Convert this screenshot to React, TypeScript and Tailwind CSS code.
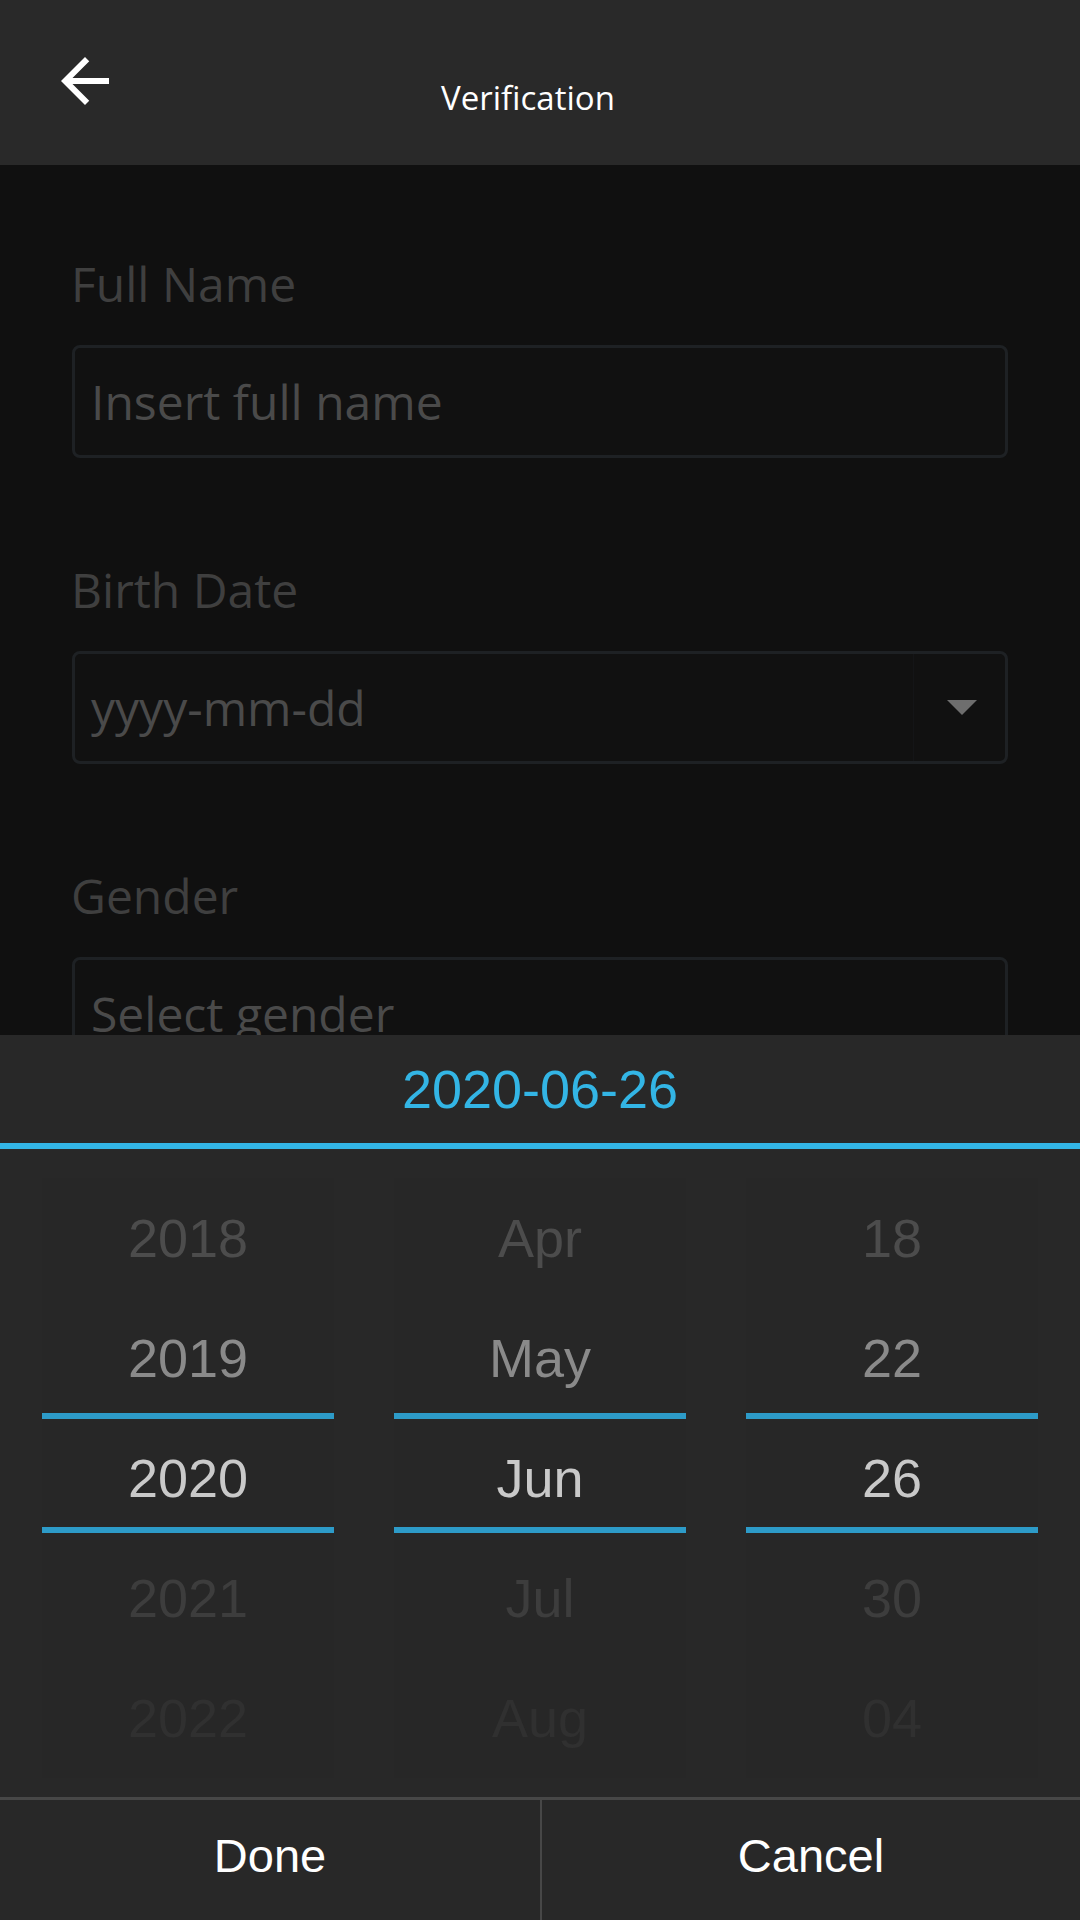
import React from "react";

const rowColors = ["#4c4c4c", "#8a8a8a", "#c9c9c9", "#3d3d3d", "#303030"];

function Column({ items }: { items: string[] }) {
  return (
    <div className="relative h-[600px] bg-[#272727] flex flex-col">
      {items.map((t, i) => (
        <div
          key={t + i}
          className="h-[120px] flex items-center justify-center text-[54px] leading-none"
          style={{ color: rowColors[i] }}
        >
          {t}
        </div>
      ))}
      <div className="absolute left-0 right-0 top-[235px] h-[6px] bg-[#2d9bc8]" />
      <div className="absolute left-0 right-0 top-[349px] h-[6px] bg-[#2d9bc8]" />
    </div>
  );
}

function Field({
  label,
  placeholder,
  dropdown,
  first,
}: {
  label: string;
  placeholder: string;
  dropdown?: boolean;
  first?: boolean;
}) {
  return (
    <div className={first ? "flex flex-col" : "flex flex-col mt-[100px]"}>
      <div className="h-[64px] leading-[64px] text-[48px] text-[#3f3f3f] -ml-[1px]">{label}</div>
      <div className="mt-[29px] h-[113px] border-[3px] border-[#1e2124] rounded-[8px] bg-[#111111] flex items-stretch">
        <div className="flex-1 flex items-center pl-[16px] pr-[15px] text-[48px] text-[#4a4a4a] leading-none">
          {placeholder}
        </div>
        {dropdown && (
          <div className="w-[92px] border-l border-[#141517] flex items-center justify-center pl-[4px]">
            <svg width="30" height="15" viewBox="0 0 30 15">
              <polygon points="0,0 30,0 15,15" fill="#6e6e6e" />
            </svg>
          </div>
        )}
      </div>
    </div>
  );
}

export default function App() {
  return (
    <div
      className="relative w-[1080px] h-[1920px] overflow-hidden bg-[#101010]"
      style={{ fontFamily: '"Open Sans", "Noto Sans", sans-serif' }}
    >
      {/* Header */}
      <div className="h-[165px] bg-[#292929] flex items-start">
        <div className="w-[144px] pl-[49px] pt-[45px]">
          <svg width="72" height="72" viewBox="0 0 24 24">
            <path
              d="M20 11H7.83l5.59-5.59L12 4l-8 8 8 8 1.41-1.41L7.83 13H20v-2z"
              fill="#ffffff"
            />
          </svg>
        </div>
        <div className="flex-1 flex justify-center pt-[78px]">
          <span className="text-[33px] leading-[40px] text-white">Verification</span>
        </div>
        <div className="w-[168px]" />
      </div>

      {/* Form */}
      <div className="px-[72px] pt-[87px] flex flex-col">
        <Field first label="Full Name" placeholder="Insert full name" />
        <Field label="Birth Date" placeholder="yyyy-mm-dd" dropdown />
        <Field label="Gender" placeholder="Select gender" />
      </div>

      {/* Date picker sheet */}
      <div
        className="absolute left-0 bottom-0 w-[1080px] h-[885px] bg-[#282828] flex flex-col"
        style={{ fontFamily: '"Liberation Sans", Arial, sans-serif' }}
      >
        <div className="h-[108px] flex items-center justify-center text-[54px] leading-none text-[#33b5e5]">
          2020-06-26
        </div>
        <div className="h-[6px] bg-[#33b5e5]" />
        <div className="h-[648px] pt-[29px] px-[42px] grid grid-cols-3 gap-x-[60px] items-start">
          <Column items={["2018", "2019", "2020", "2021", "2022"]} />
          <Column items={["Apr", "May", "Jun", "Jul", "Aug"]} />
          <Column items={["18", "22", "26", "30", "04"]} />
        </div>
        <div className="h-[3px] bg-[#474747]" />
        <div className="h-[120px] flex">
          <div className="w-[540px] flex items-center justify-center pb-[9px] text-[47px] leading-none text-white">
            Done
          </div>
          <div className="w-[2px] bg-[#474747]" />
          <div className="flex-1 flex items-center justify-center pb-[9px] text-[47px] leading-none text-white">
            Cancel
          </div>
        </div>
      </div>
    </div>
  );
}
